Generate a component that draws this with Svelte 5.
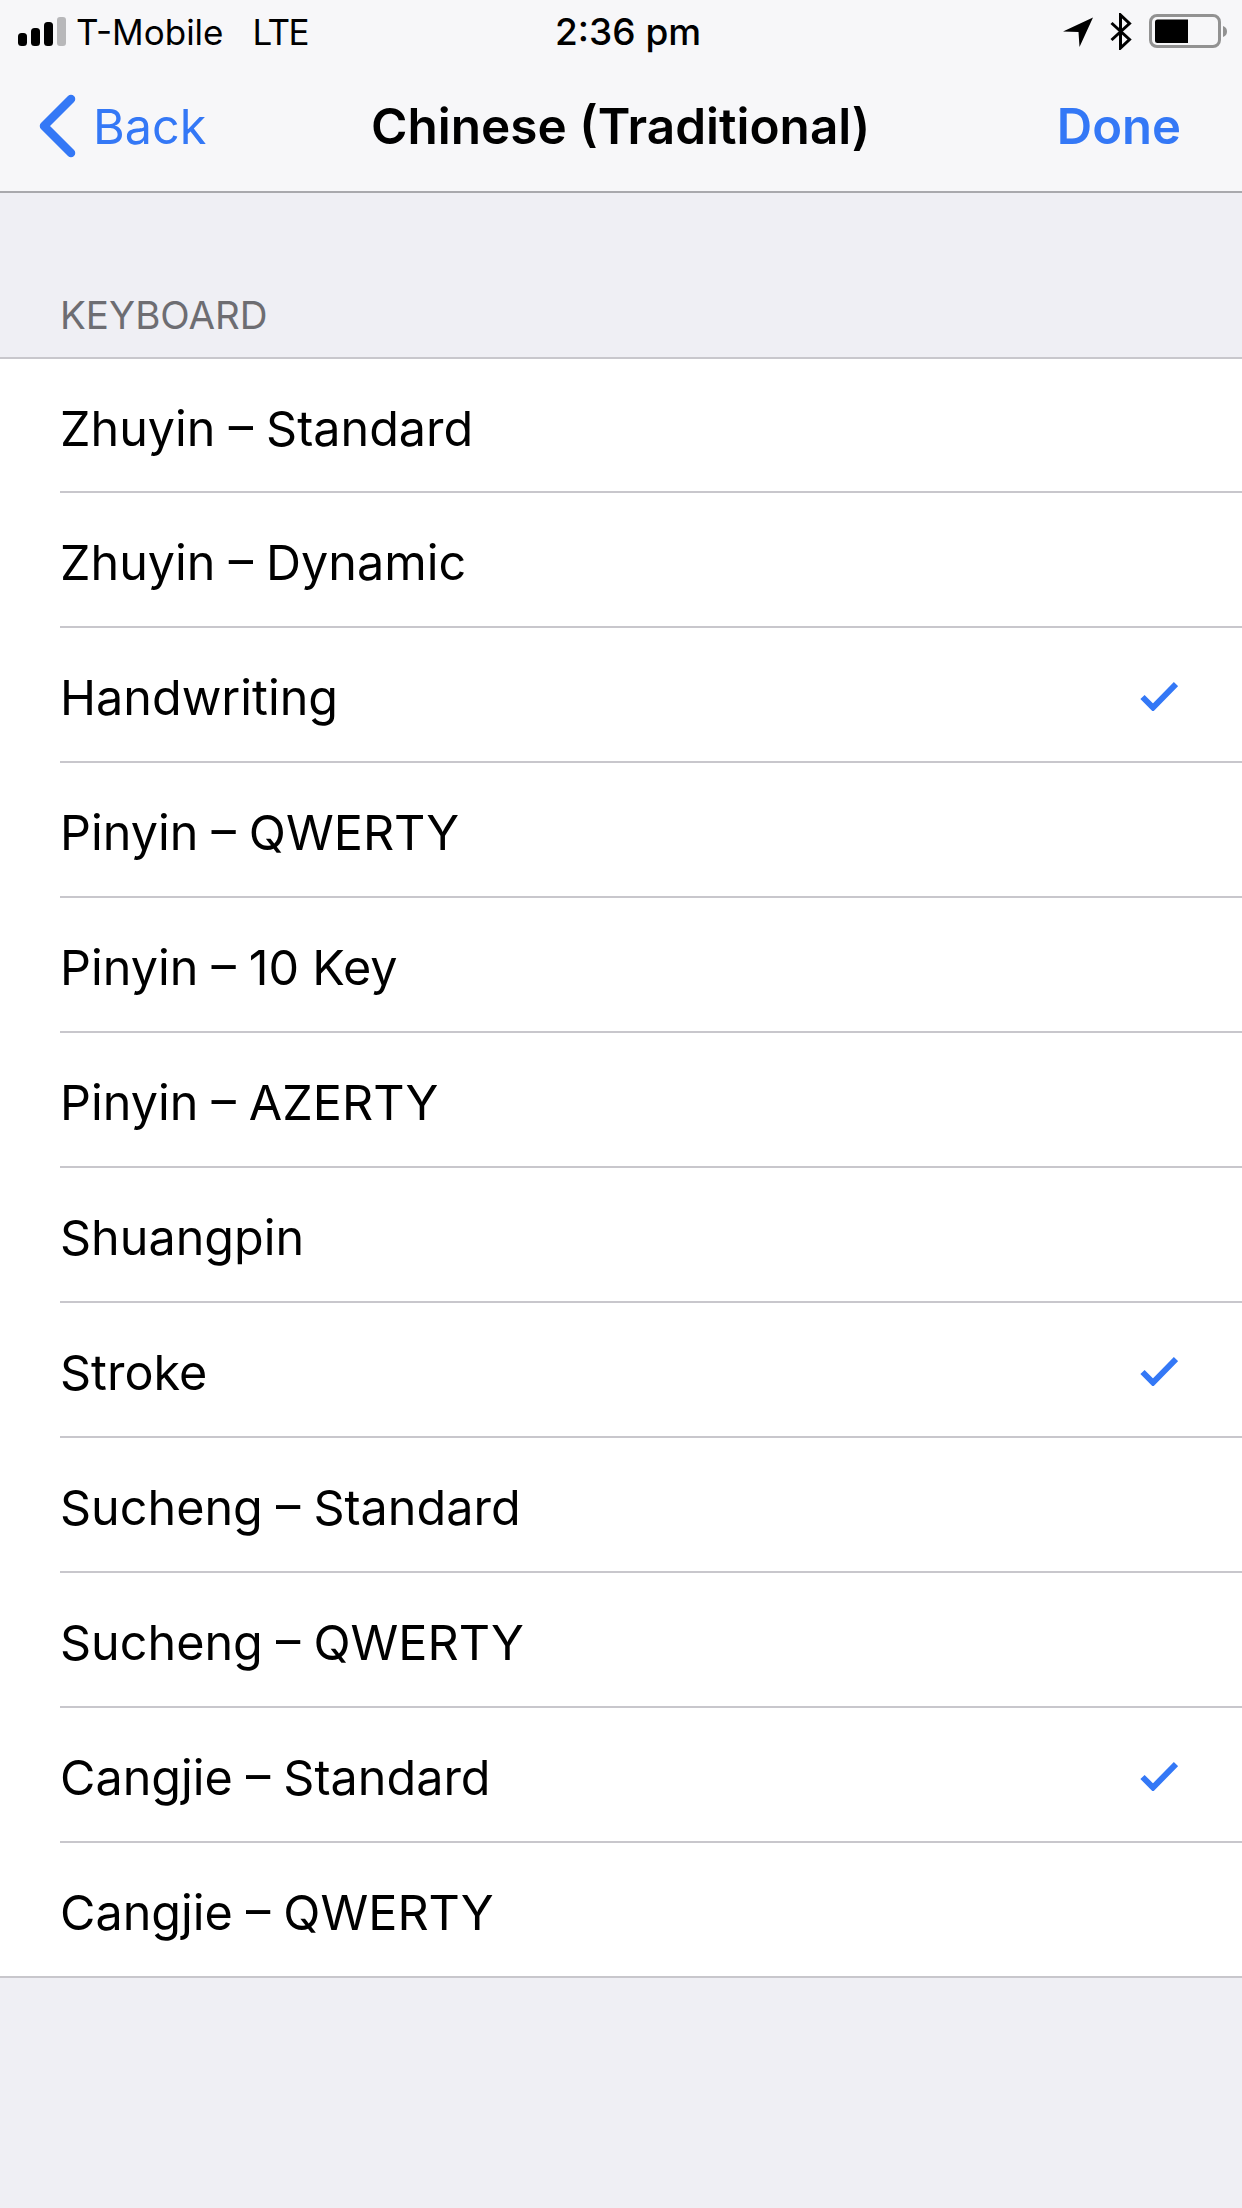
<script lang="ts">
	const rows = [
		{ label: 'Zhuyin – Standard', checked: false },
		{ label: 'Zhuyin – Dynamic', checked: false },
		{ label: 'Handwriting', checked: true },
		{ label: 'Pinyin – QWERTY', checked: false },
		{ label: 'Pinyin – 10 Key', checked: false },
		{ label: 'Pinyin – AZERTY', checked: false },
		{ label: 'Shuangpin', checked: false },
		{ label: 'Stroke', checked: true },
		{ label: 'Sucheng – Standard', checked: false },
		{ label: 'Sucheng – QWERTY', checked: false },
		{ label: 'Cangjie – Standard', checked: true },
		{ label: 'Cangjie – QWERTY', checked: false }
	];
</script>

<div class="screen">
	<header class="top">
		<div class="status">
			<div class="status-left">
				<svg class="signal" width="48" height="30" viewBox="0 0 48 30">
					<rect x="0" y="16" width="9" height="13" rx="3.5" fill="#000" />
					<rect x="13" y="11" width="9" height="18" rx="3.5" fill="#000" />
					<rect x="26" y="5" width="9" height="24" rx="3.5" fill="#000" />
					<rect x="39" y="0" width="9" height="29" rx="3" fill="#b8b8ba" />
				</svg>
				<span>T-Mobile</span>
				<span class="lte">LTE</span>
			</div>
			<div class="clock">2:36 pm</div>
			<div class="status-right">
				<svg width="30" height="30" viewBox="0 0 30 30"><path d="M0 14.5 L30 0.5 L16.5 30 L15.5 15 Z" fill="#000" /></svg>
				<svg width="22" height="37" viewBox="0 0 22 37"><path d="M1.5 10 L19.5 26.5 L10.5 35 L10.5 2 L19.5 10.5 L1.5 27" fill="none" stroke="#000" stroke-width="3" /></svg>
				<svg width="78" height="35" viewBox="0 0 78 35">
					<rect x="1.5" y="1.5" width="69" height="31" rx="6.5" fill="none" stroke="#929292" stroke-width="3" />
					<path d="M8 7 a2.5 2.5 0 0 1 2.5 -2.5 H41 V28 H10.5 a2.5 2.5 0 0 1 -2.5 -2.5 Z" fill="#000" transform="translate(-2 1)" />
					<path d="M74 12 C77 13 78 15 78 17.5 C78 20 77 22 74 23 Z" fill="#929292" />
				</svg>
			</div>
		</div>
		<nav class="nav">
			<div class="back">
				<svg width="38" height="64" viewBox="0 0 38 64"><path d="M33 5 L6 32 L33 59" fill="none" stroke="#3478f6" stroke-width="8.5" stroke-linecap="round" stroke-linejoin="round" /></svg>
				<span>Back</span>
			</div>
			<h1>Chinese (Traditional)</h1>
			<div class="done">Done</div>
		</nav>
	</header>

	<div class="section-title">KEYBOARD</div>

	<ul class="list">
		{#each rows as row}
			<li>
				<div class="row">
					<span>{row.label}</span>
					{#if row.checked}
						<svg width="38" height="30" viewBox="0 0 38 30"><path d="M2.5 16 L13 26.5 L36 3" fill="none" stroke="#3478f6" stroke-width="6" /></svg>
					{/if}
				</div>
			</li>
		{/each}
	</ul>
</div>

<style>
	:global(body) {
		margin: 0;
		background: #efeff4;
	}
	.screen {
		width: 1242px;
		height: 2208px;
		background: #efeff4;
		font-family: Inter, 'Liberation Sans', sans-serif;
		color: #000;
		overflow: hidden;
	}
	.top {
		background: #f7f7f9;
		border-bottom: 2px solid #a9a9ad;
		height: 191px;
		box-sizing: content-box;
	}
	.status {
		height: 63px;
		padding: 0 15px 0 18px;
		display: grid;
		grid-template-columns: 537px auto 1fr;
		align-items: center;
		font-size: 35px;
	}
	.status-left {
		display: flex;
		align-items: center;
		gap: 10px;
	}
	.lte {
		margin-left: 19px;
		letter-spacing: -1.5px;
	}
	.clock {
		font-weight: 500;
		font-size: 37px;
	}
	.status-right {
		display: flex;
		align-items: center;
		justify-content: flex-end;
		gap: 17px;
	}
	.nav {
		height: 126px;
		padding: 0 61px 2px 38px;
		display: grid;
		grid-template-columns: 333px auto 1fr;
		align-items: center;
		font-size: 48.5px;
		color: #3478f6;
	}
	.back {
		display: flex;
		align-items: center;
		gap: 17px;
	}
	.nav h1 {
		margin: 0;
		font-size: 49.5px;
		font-weight: 600;
		color: #000;
	}
	.done {
		font-weight: 600;
		font-size: 49px;
		text-align: right;
	}
	.section-title {
		height: 166px;
		box-sizing: border-box;
		padding: 99px 0 0 60px;
		font-size: 38.5px;
		line-height: 46px;
		color: #6d6d72;
		border-bottom: 2px solid #c8c7cc;
	}
	.list {
		list-style: none;
		margin: 0;
		padding: 0 0 0 60px;
		background: #fff;
		border-bottom: 2px solid #c8c7cc;
	}
	.list li + li {
		border-top: 2px solid #c8c7cc;
	}
	.row {
		height: 133px;
		box-sizing: border-box;
		padding: 3px 64px 0 0;
		display: flex;
		align-items: center;
		justify-content: space-between;
		font-size: 48.5px;
		word-spacing: -0.5px;
	}
	.row span {
		padding-top: 3px;
	}
	.list li:first-child .row {
		height: 132px;
	}
</style>
